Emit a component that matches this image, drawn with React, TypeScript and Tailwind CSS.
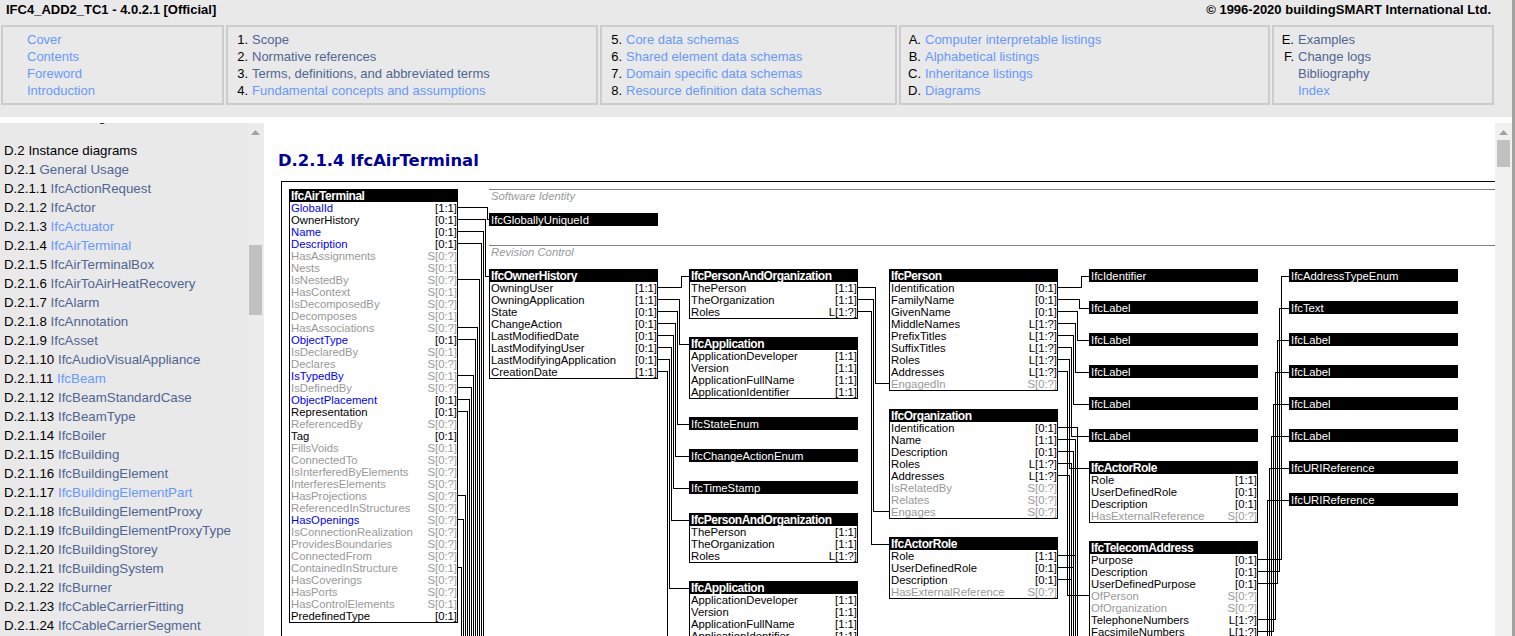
type Row = [string, string, string?]

type DiagramNode = {
  x: number
  y: number
  title: string
  rows?: Row[]
}

const BLUE = 'text-[#0000ff]'
const GRAY = 'text-[#999999]'

const navBoxes = [
  {
    width: 'w-[223px]',
    items: [['', 'Cover', 1], ['', 'Contents', 1], ['', 'Foreword', 1], ['', 'Introduction', 1]],
  },
  {
    width: 'w-[372px]',
    items: [
      ['1.', 'Scope', 0],
      ['2.', 'Normative references', 0],
      ['3.', 'Terms, definitions, and abbreviated terms', 0],
      ['4.', 'Fundamental concepts and assumptions', 1],
    ],
  },
  {
    width: 'w-[297px]',
    items: [
      ['5.', 'Core data schemas', 1],
      ['6.', 'Shared element data schemas', 1],
      ['7.', 'Domain specific data schemas', 1],
      ['8.', 'Resource definition data schemas', 1],
    ],
  },
  {
    width: 'w-[371px]',
    items: [
      ['A.', 'Computer interpretable listings', 1],
      ['B.', 'Alphabetical listings', 1],
      ['C.', 'Inheritance listings', 1],
      ['D.', 'Diagrams', 1],
    ],
  },
  {
    width: 'w-[222px]',
    items: [['E.', 'Examples', 0], ['F.', 'Change logs', 0], ['', 'Bibliography', 0], ['', 'Index', 1]],
  },
] as const

const sidebar: [string, string, boolean?][] = [
  ['D.2.1', 'General Usage'],
  ['D.2.1.1', 'IfcActionRequest'],
  ['D.2.1.2', 'IfcActor'],
  ['D.2.1.3', 'IfcActuator', true],
  ['D.2.1.4', 'IfcAirTerminal', true],
  ['D.2.1.5', 'IfcAirTerminalBox'],
  ['D.2.1.6', 'IfcAirToAirHeatRecovery'],
  ['D.2.1.7', 'IfcAlarm'],
  ['D.2.1.8', 'IfcAnnotation'],
  ['D.2.1.9', 'IfcAsset'],
  ['D.2.1.10', 'IfcAudioVisualAppliance'],
  ['D.2.1.11', 'IfcBeam', true],
  ['D.2.1.12', 'IfcBeamStandardCase'],
  ['D.2.1.13', 'IfcBeamType'],
  ['D.2.1.14', 'IfcBoiler'],
  ['D.2.1.15', 'IfcBuilding'],
  ['D.2.1.16', 'IfcBuildingElement'],
  ['D.2.1.17', 'IfcBuildingElementPart', true],
  ['D.2.1.18', 'IfcBuildingElementProxy'],
  ['D.2.1.19', 'IfcBuildingElementProxyType'],
  ['D.2.1.20', 'IfcBuildingStorey'],
  ['D.2.1.21', 'IfcBuildingSystem'],
  ['D.2.1.22', 'IfcBurner'],
  ['D.2.1.23', 'IfcCableCarrierFitting'],
  ['D.2.1.24', 'IfcCableCarrierSegment'],
]

const personAndOrg: Row[] = [
  ['ThePerson', '[1:1]'],
  ['TheOrganization', '[1:1]'],
  ['Roles', 'L[1:?]'],
]

const application: Row[] = [
  ['ApplicationDeveloper', '[1:1]'],
  ['Version', '[1:1]'],
  ['ApplicationFullName', '[1:1]'],
  ['ApplicationIdentifier', '[1:1]'],
]

const actorRole: Row[] = [
  ['Role', '[1:1]'],
  ['UserDefinedRole', '[0:1]'],
  ['Description', '[0:1]'],
  ['HasExternalReference', 'S[0:?]', GRAY],
]

const nodes: DiagramNode[] = [
  {
    x: 289,
    y: 189,
    title: 'IfcAirTerminal',
    rows: [
      ['GlobalId', '[1:1]', BLUE],
      ['OwnerHistory', '[0:1]'],
      ['Name', '[0:1]', BLUE],
      ['Description', '[0:1]', BLUE],
      ['HasAssignments', 'S[0:?]', GRAY],
      ['Nests', 'S[0:1]', GRAY],
      ['IsNestedBy', 'S[0:?]', GRAY],
      ['HasContext', 'S[0:1]', GRAY],
      ['IsDecomposedBy', 'S[0:?]', GRAY],
      ['Decomposes', 'S[0:1]', GRAY],
      ['HasAssociations', 'S[0:?]', GRAY],
      ['ObjectType', '[0:1]', BLUE],
      ['IsDeclaredBy', 'S[0:1]', GRAY],
      ['Declares', 'S[0:?]', GRAY],
      ['IsTypedBy', 'S[0:1]', BLUE],
      ['IsDefinedBy', 'S[0:?]', GRAY],
      ['ObjectPlacement', '[0:1]', BLUE],
      ['Representation', '[0:1]'],
      ['ReferencedBy', 'S[0:?]', GRAY],
      ['Tag', '[0:1]'],
      ['FillsVoids', 'S[0:1]', GRAY],
      ['ConnectedTo', 'S[0:?]', GRAY],
      ['IsInterferedByElements', 'S[0:?]', GRAY],
      ['InterferesElements', 'S[0:?]', GRAY],
      ['HasProjections', 'S[0:?]', GRAY],
      ['ReferencedInStructures', 'S[0:?]', GRAY],
      ['HasOpenings', 'S[0:?]', BLUE],
      ['IsConnectionRealization', 'S[0:?]', GRAY],
      ['ProvidesBoundaries', 'S[0:?]', GRAY],
      ['ConnectedFrom', 'S[0:?]', GRAY],
      ['ContainedInStructure', 'S[0:1]', GRAY],
      ['HasCoverings', 'S[0:?]', GRAY],
      ['HasPorts', 'S[0:?]', GRAY],
      ['HasControlElements', 'S[0:1]', GRAY],
      ['PredefinedType', '[0:1]'],
    ],
  },
  { x: 489, y: 213, title: 'IfcGloballyUniqueId' },
  {
    x: 489,
    y: 269,
    title: 'IfcOwnerHistory',
    rows: [
      ['OwningUser', '[1:1]'],
      ['OwningApplication', '[1:1]'],
      ['State', '[0:1]'],
      ['ChangeAction', '[0:1]'],
      ['LastModifiedDate', '[0:1]'],
      ['LastModifyingUser', '[0:1]'],
      ['LastModifyingApplication', '[0:1]'],
      ['CreationDate', '[1:1]'],
    ],
  },
  { x: 689, y: 269, title: 'IfcPersonAndOrganization', rows: personAndOrg },
  { x: 689, y: 337, title: 'IfcApplication', rows: application },
  { x: 689, y: 417, title: 'IfcStateEnum' },
  { x: 689, y: 449, title: 'IfcChangeActionEnum' },
  { x: 689, y: 481, title: 'IfcTimeStamp' },
  { x: 689, y: 513, title: 'IfcPersonAndOrganization', rows: personAndOrg },
  { x: 689, y: 581, title: 'IfcApplication', rows: application },
  {
    x: 889,
    y: 269,
    title: 'IfcPerson',
    rows: [
      ['Identification', '[0:1]'],
      ['FamilyName', '[0:1]'],
      ['GivenName', '[0:1]'],
      ['MiddleNames', 'L[1:?]'],
      ['PrefixTitles', 'L[1:?]'],
      ['SuffixTitles', 'L[1:?]'],
      ['Roles', 'L[1:?]'],
      ['Addresses', 'L[1:?]'],
      ['EngagedIn', 'S[0:?]', GRAY],
    ],
  },
  {
    x: 889,
    y: 409,
    title: 'IfcOrganization',
    rows: [
      ['Identification', '[0:1]'],
      ['Name', '[1:1]'],
      ['Description', '[0:1]'],
      ['Roles', 'L[1:?]'],
      ['Addresses', 'L[1:?]'],
      ['IsRelatedBy', 'S[0:?]', GRAY],
      ['Relates', 'S[0:?]', GRAY],
      ['Engages', 'S[0:?]', GRAY],
    ],
  },
  { x: 889, y: 537, title: 'IfcActorRole', rows: actorRole },
  { x: 1089, y: 269, title: 'IfcIdentifier' },
  { x: 1089, y: 301, title: 'IfcLabel' },
  { x: 1089, y: 333, title: 'IfcLabel' },
  { x: 1089, y: 365, title: 'IfcLabel' },
  { x: 1089, y: 397, title: 'IfcLabel' },
  { x: 1089, y: 429, title: 'IfcLabel' },
  { x: 1089, y: 461, title: 'IfcActorRole', rows: actorRole },
  {
    x: 1089,
    y: 541,
    title: 'IfcTelecomAddress',
    rows: [
      ['Purpose', '[0:1]'],
      ['Description', '[0:1]'],
      ['UserDefinedPurpose', '[0:1]'],
      ['OfPerson', 'S[0:?]', GRAY],
      ['OfOrganization', 'S[0:?]', GRAY],
      ['TelephoneNumbers', 'L[1:?]'],
      ['FacsimileNumbers', 'L[1:?]'],
    ],
  },
  { x: 1289, y: 269, title: 'IfcAddressTypeEnum' },
  { x: 1289, y: 301, title: 'IfcText' },
  { x: 1289, y: 333, title: 'IfcLabel' },
  { x: 1289, y: 365, title: 'IfcLabel' },
  { x: 1289, y: 397, title: 'IfcLabel' },
  { x: 1289, y: 429, title: 'IfcLabel' },
  { x: 1289, y: 461, title: 'IfcURIReference' },
  { x: 1289, y: 493, title: 'IfcURIReference' },
]

// every connector: [from x, from y, bend x, to y, to x], in page pixels
const BOTTOM = 640
const connectors: [number, number, number, number, number][] = [
  [458, 207, 487, 219, 489],
  [458, 219, 485, 276, 489],
  [458, 231, 483, BOTTOM, 483],
  [458, 243, 481, BOTTOM, 481],
  [458, 279, 479, BOTTOM, 479],
  [458, 327, 477, BOTTOM, 477],
  [458, 339, 475, BOTTOM, 475],
  [458, 375, 473, BOTTOM, 473],
  [458, 387, 471, BOTTOM, 471],
  [458, 399, 469, BOTTOM, 469],
  [458, 411, 467, BOTTOM, 467],
  [458, 495, 465, BOTTOM, 465],
  [458, 519, 463, BOTTOM, 463],
  [458, 567, 461, BOTTOM, 461],

  [658, 287, 681, 276, 689],
  [658, 299, 679, 344, 689],
  [658, 311, 677, 424, 689],
  [658, 323, 675, 456, 689],
  [658, 335, 673, 488, 689],
  [658, 347, 671, 520, 689],
  [658, 359, 669, 588, 689],
  [658, 371, 667, BOTTOM, 667],

  [858, 287, 875, 383, 889],
  [858, 299, 873, 511, 889],
  [858, 311, 871, 544, 889],

  [1058, 287, 1081, 276, 1089],
  [1058, 299, 1079, 308, 1089],
  [1058, 311, 1077, 340, 1089],
  [1058, 323, 1075, 372, 1089],
  [1058, 335, 1073, 404, 1089],
  [1058, 347, 1071, 436, 1089],
  [1058, 359, 1069, 468, 1089],
  [1058, 371, 1067, 595, 1089],

  [1058, 427, 1077, BOTTOM, 1077],
  [1058, 439, 1075, BOTTOM, 1075],
  [1058, 451, 1073, BOTTOM, 1073],
  [1058, 463, 1071, BOTTOM, 1071],
  [1058, 475, 1069, BOTTOM, 1069],
  [1058, 555, 1075, 555, 1075],
  [1058, 567, 1073, 567, 1073],
  [1058, 579, 1071, 579, 1071],

  [1258, 559, 1281, 276, 1289],
  [1258, 571, 1279, 308, 1289],
  [1258, 583, 1277, 340, 1289],
  [1258, 619, 1275, 372, 1289],
  [1258, 631, 1273, 404, 1289],
  [1271, BOTTOM, 1271, 436, 1289],
  [1269, BOTTOM, 1269, 468, 1289],
  [1267, BOTTOM, 1267, 500, 1289],
]

// canvas origin in page pixels (just inside the frame's border)
const OX = 282
const OY = 182

function Scrollbar({ className, thumb }: { className: string; thumb: string }) {
  return (
    <div className={`flex shrink-0 flex-col ${className}`}>
      <svg width="9" height="5" viewBox="0 0 9 5" className="mx-auto mt-[7px] shrink-0">
        <path d="M4.5 0 L9 5 L0 5 Z" fill="#a3a3a3" />
      </svg>
      <div className={`mx-auto w-[13px] shrink-0 bg-[#c1c1c1] ${thumb}`} />
    </div>
  )
}

function Node({ node }: { node: DiagramNode }) {
  return (
    <div
      className="absolute w-[169px] text-[11.3px] leading-[12px] text-black"
      style={{ left: node.x - OX, top: node.y - OY }}
    >
      {node.rows ? (
        <>
          <div className="flex h-[13px] items-center bg-black pl-[2px] text-[12px] font-bold tracking-[-0.45px] text-white">
            {node.title}
          </div>
          <div className="border-x border-b border-black bg-white">
            {node.rows.map(([name, card, color]) => (
              <div key={name} className={`flex h-[12px] items-center justify-between pl-[1px] ${color === GRAY ? GRAY : ''}`}>
                <span className={color ?? ''}>{name}</span>
                <span className={color === BLUE && card.startsWith('S') ? GRAY : ''}>{card}</span>
              </div>
            ))}
          </div>
        </>
      ) : (
        <div className="flex h-[13px] items-center bg-black pl-[2px] text-white">{node.title}</div>
      )}
    </div>
  )
}

function Diagram() {
  return (
    <div className="relative min-h-0 flex-1 overflow-hidden border-t border-l border-black">
      <svg className="absolute top-0 left-0" width="1213" height="460" shapeRendering="crispEdges">
        {connectors.map(([x1, y1, bx, y2, x2], i) => (
          <polyline
            key={i}
            fill="none"
            stroke="#000"
            strokeWidth="1"
            points={`${x1 - OX},${y1 - OY + 0.5} ${bx - OX + 0.5},${y1 - OY + 0.5} ${bx - OX + 0.5},${y2 - OY + 0.5} ${x2 - OX},${y2 - OY + 0.5}`}
          />
        ))}
      </svg>

      <div className="absolute top-[7px] right-0 left-[207px] border-t border-[#808080] pl-[2px] text-[11.3px] leading-[13px] text-[#999999] italic">
        Software Identity
      </div>
      <div className="absolute top-[63px] right-0 left-[207px] border-t border-[#808080] pl-[2px] text-[11.3px] leading-[13px] text-[#999999] italic">
        Revision Control
      </div>

      {nodes.map((node) => (
        <Node key={`${node.x}-${node.y}`} node={node} />
      ))}
    </div>
  )
}

export default function App() {
  return (
    <div className="flex h-[636px] w-[1515px] overflow-hidden bg-white font-['Liberation_Sans',Arial,sans-serif] text-black">
      <div className="flex w-[1512px] shrink-0 flex-col">
        <header className="h-[117px] shrink-0 bg-[#e9e9e9]">
          <div className="flex h-[25px] items-start justify-between pt-[1px] pr-[21px] pl-[6px] text-[13px] leading-[17px] font-bold">
            <span>IFC4_ADD2_TC1 - 4.0.2.1 [Official]</span>
            <span>© 1996-2020 buildingSMART International Ltd.</span>
          </div>
          <nav className="ml-[1px] flex gap-[2px]">
            {navBoxes.map((box, i) => (
              <div key={i} className={`h-[80px] border-2 border-[#cccccc] pt-[4px] text-[13px] leading-[17px] ${box.width}`}>
                {box.items.map(([num, label, active]) => (
                  <div key={label} className="flex">
                    <span className="w-[24px] shrink-0 pr-1 text-right">{num}</span>
                    <span className={active ? 'text-[#6699ff]' : 'text-[#4f6694]'}>{label}</span>
                  </div>
                ))}
              </div>
            ))}
          </nav>
        </header>

        <div className="mt-[6px] flex min-h-0 flex-1">
          <aside className="flex w-[264px] shrink-0 overflow-hidden bg-[#e9e9e9] text-[13.3px] leading-[19px]">
            <div className="w-[248px] shrink-0 pl-[4px]">
              <div className="mt-[-16px] mb-[15px] h-[19px] whitespace-nowrap">D.1 Schema diagrams</div>
              <div className="h-[19px]">D.2 Instance diagrams</div>
              {sidebar.map(([num, label, active]) => (
                <div key={num} className="h-[19px] whitespace-nowrap">
                  {num} <span className={active ? 'text-[#6699ff]' : 'text-[#4f6694]'}>{label}</span>
                </div>
              ))}
            </div>
            <Scrollbar className="w-[15px] bg-[#ececec]" thumb="mt-[110px] h-[70px]" />
            <div className="w-px bg-[#ececec]" />
          </aside>

          <main className="flex min-w-0 flex-1 bg-white">
            <div className="flex min-w-0 flex-1 flex-col pl-[17px]">
              <h1 className="ml-[-3px] flex h-[58px] shrink-0 items-center pt-[18px] font-['DejaVu_Sans',Verdana,sans-serif] text-[16.4px] font-bold text-[#000099]">
                D.2.1.4 IfcAirTerminal
              </h1>
              <Diagram />
            </div>
            <Scrollbar className="w-[17px] bg-[#f1f1f1]" thumb="mt-[5px] h-[27px]" />
          </main>
        </div>
      </div>
      <div className="w-[3px] shrink-0 bg-[#a3a3a0]" />
    </div>
  )
}
